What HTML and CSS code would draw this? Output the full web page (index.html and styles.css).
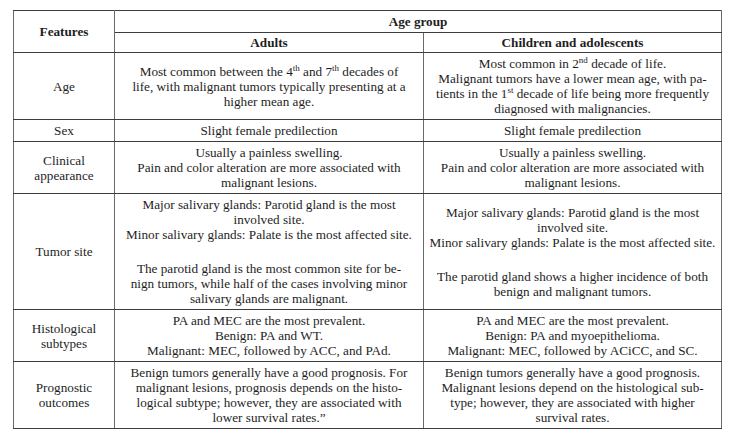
FILE: index.html
```html
<!DOCTYPE html>
<html lang="en">
<head>
<meta charset="utf-8">
<link rel="stylesheet" href="styles.css">
<title>Age group features</title>
</head>
<body>
<table class="features-table">
  <colgroup>
    <col class="col-feature">
    <col class="col-adults">
    <col class="col-children">
  </colgroup>
  <thead>
    <tr>
      <th rowspan="2" class="head-feature">Features</th>
      <th colspan="2" class="head-group">Age group</th>
    </tr>
    <tr>
      <th class="head-sub">Adults</th>
      <th class="head-sub">Children and adolescents</th>
    </tr>
  </thead>
  <tbody>
    <tr>
      <td class="label">Age</td>
      <td>Most common between the 4<sup>th</sup> and 7<sup>th</sup> decades of<br>life, with malignant tumors typically presenting at a<br>higher mean age.</td>
      <td>Most common in 2<sup>nd</sup> decade of life.<br>Malignant tumors have a lower mean age, with pa-<br>tients in the 1<sup>st</sup> decade of life being more frequently<br>diagnosed with malignancies.</td>
    </tr>
    <tr>
      <td class="label">Sex</td>
      <td>Slight female predilection</td>
      <td>Slight female predilection</td>
    </tr>
    <tr>
      <td class="label">Clinical<br>appearance</td>
      <td>Usually a painless swelling.<br>Pain and color alteration are more associated with<br>malignant lesions.</td>
      <td>Usually a painless swelling.<br>Pain and color alteration are more associated with<br>malignant lesions.</td>
    </tr>
    <tr>
      <td class="label">Tumor site</td>
      <td>
        <p class="para">Major salivary glands: Parotid gland is the most<br>involved site.<br>Minor salivary glands: Palate is the most affected site.</p>
        <p class="para">The parotid gland is the most common site for be-<br>nign tumors, while half of the cases involving minor<br>salivary glands are malignant.</p>
      </td>
      <td>
        <p class="para">Major salivary glands: Parotid gland is the most<br>involved site.<br>Minor salivary glands: Palate is the most affected site.</p>
        <p class="para">The parotid gland shows a higher incidence of both<br>benign and malignant tumors.</p>
      </td>
    </tr>
    <tr>
      <td class="label">Histological<br>subtypes</td>
      <td>PA and MEC are the most prevalent.<br>Benign: PA and WT.<br>Malignant: MEC, followed by ACC, and PAd.</td>
      <td>PA and MEC are the most prevalent.<br>Benign: PA and myoepithelioma.<br>Malignant: MEC, followed by ACiCC, and SC.</td>
    </tr>
    <tr>
      <td class="label">Prognostic<br>outcomes</td>
      <td>Benign tumors generally have a good prognosis. For<br>malignant lesions, prognosis depends on the histo-<br>logical subtype; however, they are associated with<br>lower survival rates.”</td>
      <td>Benign tumors generally have a good prognosis.<br>Malignant lesions depend on the histological sub-<br>type; however, they are associated with higher<br>survival rates.</td>
    </tr>
  </tbody>
</table>
</body>
</html>
```

FILE: styles.css
```css
html, body {
  margin: 0;
  background: #ffffff;
}

body {
  padding: 10px 10px 0 13px;
  font-family: "Liberation Serif", "Times New Roman", serif;
  font-size: 13.2px;
  line-height: 15px;
  color: #1e1e1e;
}

.features-table {
  width: 708px;
  border-collapse: collapse;
  table-layout: fixed;
  border-top: 1px solid #8a8a8a;
  border-left: 1px solid #8a8a8a;
  border-right: 1px solid #2a2a2a;
  border-bottom: 1px solid #3a3a3a;
}

.col-feature { width: 101px; }
.col-adults { width: 309px; }
.col-children { width: 298px; }

.features-table th,
.features-table td {
  border-top: 1px solid #3c3c3c;
  border-bottom: 1px solid #3c3c3c;
  border-left: 1px solid #6a6a6a;
  border-right: 1px solid #6a6a6a;
  padding: 3px 2px;
  text-align: center;
  vertical-align: middle;
  white-space: nowrap;
}

.features-table th {
  font-weight: bold;
}

.head-group {
  height: 15px;
  padding-top: 3px;
  padding-bottom: 3px;
}

.features-table .head-sub {
  height: 15px;
  padding-top: 2px;
  padding-bottom: 2px;
}

.features-table sup {
  font-size: 9px;
  line-height: 0;
  vertical-align: 5px;
}

.para {
  margin: 0;
}

.para + .para {
  margin-top: 19px;
}
```
